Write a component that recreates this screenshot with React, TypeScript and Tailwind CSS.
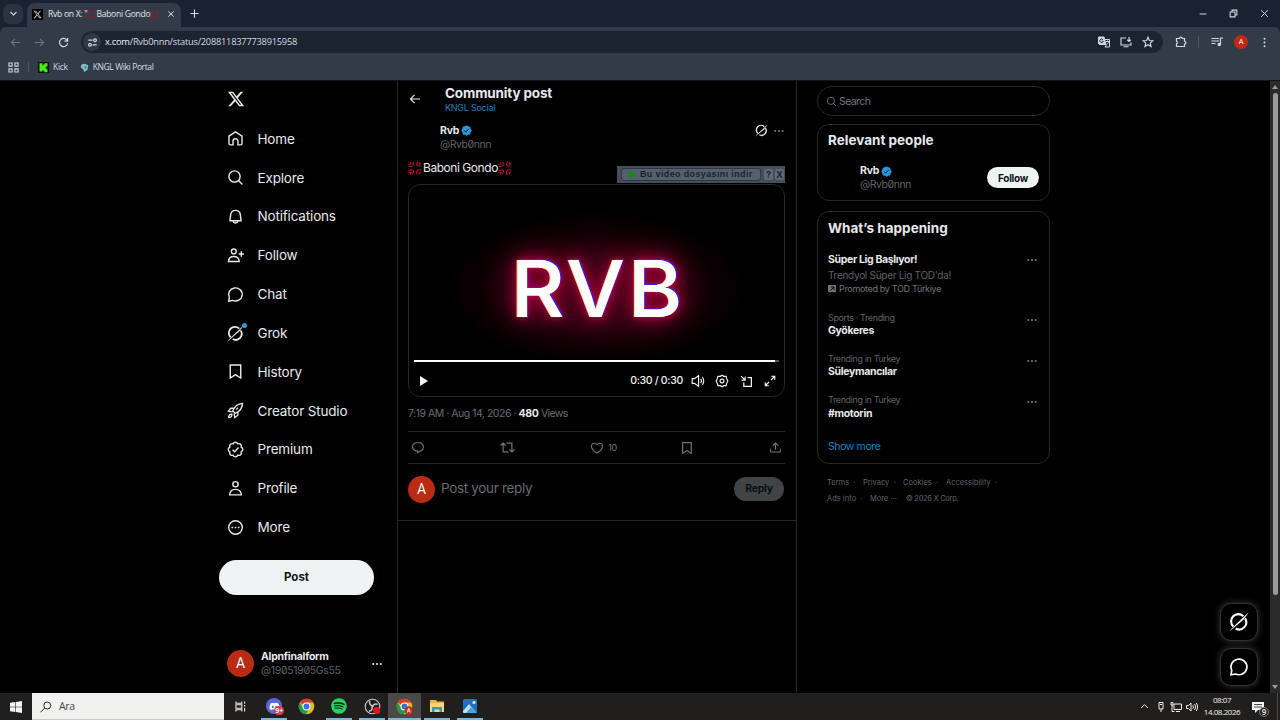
import React from "react";
import { FaDiscord, FaSpotify } from "react-icons/fa6";

type P = { className?: string };

const Svg = ({ className = "", children, sw = 2 }: { className?: string; children: React.ReactNode; sw?: number }) => (
  <svg viewBox="0 0 24 24" fill="none" stroke="currentColor" strokeWidth={sw} className={"block shrink-0 " + className}>
    {children}
  </svg>
);
const Solid = ({ className = "", d }: { className?: string; d: string }) => (
  <svg viewBox="0 0 24 24" fill="currentColor" className={"block shrink-0 " + className}>
    <path d={d} />
  </svg>
);

const BADGE =
  "M22.25 12c0-1.43-.88-2.67-2.19-3.34.46-1.39.2-2.9-.81-3.91s-2.52-1.27-3.91-.81c-.66-1.31-1.91-2.19-3.34-2.19s-2.67.88-3.33 2.19c-1.4-.46-2.91-.2-3.92.81s-1.26 2.52-.8 3.91c-1.31.67-2.2 1.91-2.2 3.34s.89 2.67 2.2 3.34c-.46 1.39-.21 2.9.8 3.91s2.52 1.26 3.91.81c.67 1.31 1.91 2.19 3.34 2.19s2.68-.88 3.34-2.19c1.39.45 2.9.2 3.91-.81s1.27-2.52.81-3.91c1.31-.67 2.19-1.91 2.19-3.34z";

const XLogo = ({ className }: P) => (
  <Solid
    className={className}
    d="M18.244 2.25h3.308l-7.227 8.26 8.502 11.24H16.17l-5.214-6.817L4.99 21.75H1.68l7.73-8.835L1.254 2.25H8.08l4.713 6.231zm-1.161 17.52h1.833L7.084 4.126H5.117z"
  />
);
const Home = ({ className }: P) => (
  <Svg className={className}>
    <path d="M2.8 8.6 12 2.7l9.2 5.9v10.2c0 1.3-.9 2.2-2.2 2.2h-3.5v-5.2a3.5 3.5 0 0 0-7 0V21H5c-1.3 0-2.2-.9-2.2-2.2z" />
  </Svg>
);
const Search = ({ className }: P) => (
  <Svg className={className}>
    <circle cx="10.6" cy="10.6" r="7.9" />
    <path d="m16.2 16.2 5.6 5.6" />
  </Svg>
);
const Bell = ({ className }: P) => (
  <Svg className={className}>
    <path d="M4.2 18 5.2 9.4a6.85 6.85 0 0 1 13.6 0l1 8.6zM8.3 18.2a3.8 3.8 0 0 0 7.4 0" />
  </Svg>
);
const PersonPlus = ({ className }: P) => (
  <Svg className={className}>
    <circle cx="9.6" cy="6.3" r="3.4" />
    <path d="M2 20.5c.2-4.6 3-7.2 7.6-7.2s7.4 2.6 7.6 7.2zM20.2 6v7.600M16.400 9.800H24" />
  </Svg>
);
const Chat = ({ className }: P) => (
  <Svg className={className}>
    <path d="M2.4 21.4 3.3 16A9.6 9.3 0 1 1 8 20.4z" />
  </Svg>
);
const Grok = ({ className }: P) => (
  <Svg className={className} sw={2.5}>
    <path d="M5.2 17.4A8.5 8.5 0 0 1 17.200 5M19.200 7.600A8.500 8.500 0 0 1 8 19.800" />
    <path d="M.4 23.4C3.6 19.3 7.2 16 8.700 14.500L23.6.4C20.4 5.500 17.600 9 16 10.400L9 16.200C6 18.400 4.300 20.600.4 23.400z" fill="currentColor" stroke="none" />
  </Svg>
);
const Bookmark = ({ className }: P) => (
  <Svg className={className}>
    <path d="M4.600 2.800h14.800v18.400L12 16.300l-7.400 4.900z" />
  </Svg>
);
const Rocket = ({ className }: P) => (
  <Svg className={className} sw={1.9}>
    <path d="M8.200 12.500C10.500 6.500 15 2.600 22 2c-.500 7-4.300 11.600-10.400 13.900zM9.600 8.600 5.400 8.800 2 13.200l6 .8M15.500 14.400l-.2 4.200-4.400 3.400-.9-6M2.200 22c.2-3.200 1.500-5 4.700-4.800.2 3.200-1.500 4.600-4.700 4.800zM13 10.500l2.500-2.400" />
  </Svg>
);
const Premium = ({ className }: P) => (
  <Svg className={className}>
    <path d={BADGE} />
    <path d="m7.800 12.200 3 3 5.500-6" />
  </Svg>
);
const Person = ({ className }: P) => (
  <Svg className={className}>
    <circle cx="12" cy="6" r="3.700" />
    <path d="M3.800 21c.3-5 3.300-7.800 8.200-7.800s7.900 2.800 8.200 7.800z" />
  </Svg>
);
const MoreCircle = ({ className }: P) => (
  <Svg className={className}>
    <circle cx="12" cy="12" r="9.600" />
    <path d="M6.300 12h2.400M10.800 12h2.400M15.300 12h2.400" strokeWidth="2.400" />
  </Svg>
);
const Dots = ({ className }: P) => (
  <Svg className={className}>
    <g fill="currentColor" stroke="none">
      <circle cx="3" cy="12" r="2.500" />
      <circle cx="12" cy="12" r="2.500" />
      <circle cx="21" cy="12" r="2.500" />
    </g>
  </Svg>
);
const Verified = ({ className }: P) => (
  <svg viewBox="1 1 22 22" className={"block shrink-0 " + className}>
    <path d={BADGE} fill="#2b96dd" />
    <path d="m7.500 12.200 3.100 3 5.600-6.200" fill="none" stroke="#050a10" strokeWidth="2" />
  </svg>
);
const Reply = ({ className }: P) => (
  <Solid
    className={className}
    d="M1.751 10c0-4.420 3.584-8 8.005-8h4.366c4.490 0 8.129 3.640 8.129 8.130 0 2.960-1.607 5.680-4.196 7.110l-8.054 4.460v-3.690h-.067c-4.490.1-8.183-3.510-8.183-8.010zm8.005-6c-3.317 0-6.005 2.690-6.005 6 0 3.370 2.770 6.080 6.138 6.010l.351-.01h1.761v2.300l5.087-2.810c1.951-1.080 3.163-3.130 3.163-5.360 0-3.390-2.744-6.130-6.129-6.130H9.756z"
  />
);
const Repost = ({ className }: P) => (
  <Svg className={className} sw={1.900}>
    <path d="M1 8.800 5 4.900l4 3.900M5 5.200V19h8.500M23 15.200l-4 3.900-4-3.900M19 18.800V5h-8.500" />
  </Svg>
);
const Heart = ({ className }: P) => (
  <Svg className={className} sw={1.900}>
    <path d="M12 20.500C5.500 16.800 2.500 12.800 2.500 9c0-3 2-5.200 4.800-5.200 2 0 3.600 1 4.700 2.700 1.100-1.700 2.700-2.700 4.700-2.700 2.800 0 4.800 2.200 4.800 5.200 0 3.800-3 7.800-9.500 11.500z" />
  </Svg>
);
const Share = ({ className }: P) => (
  <Svg className={className} sw={1.900}>
    <path d="M12 16V4M6.800 8.800 12 3.600l5.200 5.200M3 14.500V20.500h18V14.500" />
  </Svg>
);
const Anger = ({ className }: P) => (
  <svg viewBox="0 0 24 24" fill="none" stroke="#b3152f" strokeWidth="1.900" strokeLinecap="round" className={"block shrink-0 " + className}>
    <path d="M8.500 2C10.500 7 9 9.500 2 9.500M4.500 2.500C5.500 4.500 5 5.500 2 5.500" />
    <path d="M16.500 1.500C13 5.500 14.500 9 22 8.500M20.500 2.500C18.500 4.500 19 5.500 22 5" />
    <path d="M15.500 22.500C13.500 17 15.500 14 22 15.500M19.500 22C18.500 20 19.500 19 22 19.500" />
    <path d="M2 16C9 13.500 11.500 16.500 7.500 22M2 20C5 18.500 5.500 20 4 22.500" />
  </svg>
);
const Back = ({ className }: P) => (
  <Svg className={className} sw={2.300}>
    <path d="M22 12H3.500M11 3.800 3 12l8 8.200" />
  </Svg>
);

const nav: [string, React.FC<P>][] = [
  ["Home", Home],
  ["Explore", Search],
  ["Notifications", Bell],
  ["Follow", PersonPlus],
  ["Chat", Chat],
  ["Grok", Grok],
  ["History", Bookmark],
  ["Creator Studio", Rocket],
  ["Premium", Premium],
  ["Profile", Person],
  ["More", MoreCircle],
];

function Browser() {
  return (
    <header className="h-[81px] shrink-0 bg-[#1a2231] font-['Open_Sans','Noto_Sans',sans-serif] text-[#d3d8e0]">
      <div className="flex h-[27px] items-center">
        <div className="ml-[3px] flex size-[20px] items-center justify-center rounded-[7px] bg-[#2b3341]">
          <Svg className="size-[9px]" sw={3}>
            <path d="m4 8 8 8 8-8" />
          </Svg>
        </div>
        <div className="ml-[4px] mt-[3px] flex h-[24px] w-[154px] items-center rounded-t-[8px] bg-[#333b49] pb-[2px] pl-[5px]">
          <div className="flex size-[11px] items-center justify-center bg-black">
            <XLogo className="size-[9px] text-[#c8c8c8]" />
          </div>
          <div className="ml-[5px] flex items-center whitespace-pre text-[8.500px] tracking-[-0.250px] text-[#e3e6ea]">
            Rvb on X: "<Anger className="size-[9px]" />Baboni Gondo<Anger className="size-[9px]" />
          </div>
          <Svg className="ml-auto mr-[6px] size-[8px]" sw={3}>
            <path d="m4 4 16 16M20 4 4 20" />
          </Svg>
        </div>
        <Svg className="ml-[8px] size-[11px]" sw={2.600}>
          <path d="M12 3v18M3 12h18" />
        </Svg>
        <div className="ml-auto flex w-[81px] items-center justify-between pr-[11px]">
          <Svg className="size-[8px]" sw={3}>
            <path d="M2 12h20" />
          </Svg>
          <Svg className="size-[9px]" sw={2.800}>
            <path d="M3 8h13v13H3zM8 8V3h13v13h-5" />
          </Svg>
          <Svg className="size-[9px]" sw={2.600}>
            <path d="m3 3 18 18M21 3 3 21" />
          </Svg>
        </div>
      </div>
      <div className="h-[54px] rounded-t-[6px] border-b border-[#11151c] bg-[#333b49]">
        <div className="flex h-[30px] items-center">
          <Svg className="ml-[10px] size-[11px] text-[#707986]" sw={2.200}>
            <path d="M22 12H3M11 4l-8 8 8 8" />
          </Svg>
          <Svg className="ml-[13px] size-[11px] text-[#707986]" sw={2.200}>
            <path d="M2 12h19M13 4l8 8-8 8" />
          </Svg>
          <Svg className="ml-[13px] size-[11px]" sw={2.600}>
            <path d="M20 7.500A9 9 0 1 0 21 14M21 2v7h-7" />
          </Svg>
          <div className="ml-[12px] flex h-[22px] w-[1082px] items-center rounded-full bg-[#1c2432] pl-[2px]">
            <div className="flex size-[18px] items-center justify-center rounded-full bg-[#303846]">
              <Svg className="size-[11px]" sw={2.600}>
                <path d="M3 7h9M12 17h9" />
                <circle cx="17.500" cy="7" r="3" />
                <circle cx="6.500" cy="17" r="3" />
              </Svg>
            </div>
            <span className="ml-[4px] text-[9.300px] tracking-[-0.250px]">
              <span className="text-[#eef0f3]">x.com</span>/Rvb0nnn/status/2088118377738915958
            </span>
            <div className="ml-auto flex items-center gap-[10px] pr-[9px]">
              <Svg className="size-[12px]" sw={2}>
                <path d="M1 2h11l4 15H3L1 15z" fill="currentColor" />
                <path d="M14 7h9v15h-9l3-4M16 11h6M19 9v2M21 11c-.5 3-2 5-4 6" />
                <path d="M10 7.500a3.500 3.500 0 1 0 .5 3H8" stroke="#1c2432" />
              </Svg>
              <Svg className="size-[12px]" sw={2.300}>
                <path d="M12 4H2v14h20v-5M7 21.500h10M18 2v9M14.500 7.500 18 11l3.500-3.500" />
              </Svg>
              <Svg className="size-[12px]" sw={2.300}>
                <path d="m12 2.500 2.800 6.400 7 .7-5.300 4.600 1.600 6.800-6.100-3.600L5.900 21l1.600-6.800L2.200 9.600l7-.7z" />
              </Svg>
            </div>
          </div>
          <Svg className="ml-[12px] size-[12px]" sw={2.400}>
            <path d="M3 5h6a2.800 2.800 0 0 1 5.600 0H19v5.500a2.800 2.800 0 0 1 0 5.600V21H3v-5.200a2.800 2.800 0 0 0 0-5.200z" />
          </Svg>
          <div className="ml-[11px] h-[12px] w-px bg-[#4c5563]" />
          <Svg className="ml-[12px] size-[12px]" sw={2.400}>
            <path d="M1 5h15M1 10h15M1 15h8M19 17V4h5" />
            <circle cx="16.500" cy="17" r="2.300" fill="currentColor" />
          </Svg>
          <div className="ml-[11px] flex size-[14px] items-center justify-center rounded-full bg-[#bf2a10] text-[7.500px] text-white">A</div>
          <Svg className="ml-[11px] size-[11px]">
            <g fill="currentColor" stroke="none">
              <circle cx="12" cy="4" r="2.200" />
              <circle cx="12" cy="12" r="2.200" />
              <circle cx="12" cy="20" r="2.200" />
            </g>
          </Svg>
        </div>
        <div className="flex h-[20px] items-center pl-[8px] text-[8.500px]">
          <Svg className="size-[11px]" sw={2.300}>
            <path d="M2 2h7v7H2zM15 2h7v7h-7zM2 15h7v7H2zM15 15h7v7h-7z" />
          </Svg>
          <div className="ml-[9px] h-[10px] w-px bg-[#4c5563]" />
          <svg viewBox="0 0 11 11" className="ml-[9px] size-[11px]">
            <path fill="#0a140a" d="M0 0h11v11H0z" />
            <path fill="#4bea1d" d="M1.500 1.200h3v2h1V2.200h1v-1h3v3h-1v1h-1v1h1v1h1v3h-3v-1h-1v-1h-1v1.200h-3z" />
          </svg>
          <span className="ml-[4px] tracking-[-0.300px]">Kick</span>
          <svg viewBox="0 0 12 12" className="ml-[12px] size-[9px]">
            <path fill="#7fc3c9" d="M2 2 6 1l5 2-1 6-4 3-2-4-3-2z" />
            <path fill="#2c7f87" d="m5 5 4-1-1 4z" />
          </svg>
          <span className="ml-[4px] tracking-[-0.380px]">KNGL Wiki Portal</span>
        </div>
      </div>
    </header>
  );
}

function Sidebar() {
  return (
    <aside className="flex w-[397px] shrink-0 flex-col pl-[219px] text-[#e7e9ea]">
      <XLogo className="ml-[8px] mt-[9px] size-[18px]" />
      <nav className="mt-[11.500px]">
        {nav.map(([label, Icon]) => (
          <div key={label} className="flex h-[38.840px] items-center pl-[8px]">
            <div className="relative">
              <Icon className="size-[17px]" />
              {label === "Grok" && <i className="absolute -right-[3px] -top-[2px] size-[5px] rounded-full bg-[#2b96dd]" />}
            </div>
            <span className="ml-[13.500px] text-[13.500px] tracking-[-0.170px]">{label}</span>
          </div>
        ))}
      </nav>
      <button className="mt-[13px] h-[35px] w-[155px] rounded-full bg-[#eff3f4] pt-px text-[11.500px] font-bold text-[#0f1419]">Post</button>
      <div className="mt-[55px] flex items-center pl-[8px]">
        <div className="flex size-[27px] items-center justify-center rounded-full bg-[#b92b12] font-['Roboto',sans-serif] text-[14px] text-white">A</div>
        <div className="ml-[7px] text-[10.500px] leading-[14px]">
          <div className="font-bold tracking-[-0.250px]">Alpnfinalform</div>
          <div className="text-[#5f6367] tracking-[-0.330px] [font-feature-settings:'zero']">@19051905Gs55</div>
        </div>
        <Dots className="ml-auto mr-[15px] size-[10px]" />
      </div>
    </aside>
  );
}

function Post() {
  return (
    <main className="w-[400px] shrink-0 border-x border-[#25282b] text-[#e7e9ea]">
      <div className="flex h-[440px] flex-col border-b border-[#25282b] pl-[10px] pr-[11px]">
        <div className="flex h-[36px] items-center">
          <Back className="ml-[1px] size-[12px]" />
          <div className="ml-[24px] pt-[2px]">
            <div className="text-[13.500px] font-bold leading-[15px] tracking-[-0.150px]">Community post</div>
            <div className="text-[9px] leading-[13px] tracking-[-0.250px] text-[#2781bd]">KNGL Social</div>
          </div>
        </div>
        <div className="mt-[7px] flex h-[27px] pl-[32px]">
          <div className="text-[10.500px] leading-[13.500px]">
            <div className="flex items-center gap-[2px] font-bold tracking-[-0.250px]">
              Rvb <Verified className="size-[11px]" />
            </div>
            <div className="tracking-[-0.450px] text-[#5f6367] [font-feature-settings:'zero']">@Rvb0nnn</div>
          </div>
          <Grok className="ml-auto size-[13px]" />
          <Dots className="mr-px ml-[6px] mt-[2px] size-[10px] text-[#71767b]" />
        </div>
        <div className="relative mt-[6px] flex h-[22px] items-center text-[12px]">
          <Anger className="size-[14px]" />
          <span className="ml-px tracking-[-0.450px]">Baboni Gondo</span>
          <Anger className="size-[14px]" />
          <div className="absolute right-0 top-[9px] flex h-[17px] w-[168px] items-center bg-[#454e5a] text-[9px] font-bold text-[#1a2230]">
            <div className="ml-[4px] flex h-[13px] w-[140px] items-center whitespace-nowrap rounded-[3px] border border-[#2c3646] bg-[#56606c] pl-[6px]">
              <svg viewBox="0 0 10 10" className="mr-[3px] size-[9px] shrink-0">
                <path d="M0 0 10 5 0 10l2-5z" fill="#128c17" />
              </svg>
              <span className="font-['Liberation_Sans',sans-serif] tracking-[0.360px]">Bu video dosyasını indir</span>
            </div>
            <span className="ml-[3px] flex h-[11px] w-[9px] items-center justify-center rounded-[2px] bg-[#606a77]">?</span>
            <span className="ml-[2px] flex h-[11px] w-[9px] items-center justify-center rounded-[2px] bg-[#606a77]">X</span>
          </div>
        </div>
        <div className="mt-[5px] flex h-[213px] w-[377px] shrink-0 flex-col overflow-hidden rounded-[12px] border border-[#25282b] bg-black">
          <div className="flex h-[175px] items-center justify-center bg-[radial-gradient(ellipse_150px_78px_at_188px_104px,#3a0619_0%,#2a0411_45%,#0f0105_75%,transparent_100%)] pt-[34px]">
            <div className="scale-x-[1.060] pl-[3px] font-['Inter',sans-serif] text-[78px] font-[450] leading-none tracking-[3px] text-white [text-shadow:-1px_0_0_#ffd9a0,1px_-1px_1px_#2a20ff,0_0_5px_#c80040,0_0_12px_#b0003c,0_0_24px_#8c0032,0_0_34px_#6c0026]">
              RVB
            </div>
          </div>
          <div className="mx-[5px] mt-px flex h-[2px] shrink-0 translate-y-px bg-[#555]">
            <div className="h-[2px] w-[361px] bg-white" />
          </div>
          <div className="flex h-[35px] items-center pl-[11px] pr-[8px] pt-[5px] text-[#f2f2f2]">
            <svg viewBox="0 0 8 10" className="h-[10px] w-[8px]">
              <path d="M0 0 8 5 0 10z" fill="currentColor" />
            </svg>
            <span className="ml-auto text-[10.500px] font-medium tracking-[-0.300px]">0:30 / 0:30</span>
            <Svg className="ml-[8px] size-[14px]">
              <path d="M2 8h4l7-5v18l-7-5H2zM16.500 8.500c1.700 2 1.700 5 0 7M19.500 5.500c3 3.500 3 9.500 0 13" />
            </Svg>
            <Svg className="ml-[10px] size-[14px]">
              <path d="m12 2 3 2h4l1 4 2 4-2 4-1 4h-4l-3 2-3-2H5l-1-4-2-4 2-4 1-4h4z" />
              <circle cx="12" cy="12" r="3.300" />
            </Svg>
            <Svg className="ml-[11px] size-[13px]" sw={2.300}>
              <path d="M14 5h7v16H7v-7M2 2l7 7M9.500 3v6.500H3" />
            </Svg>
            <Svg className="ml-[11px] size-[12px]" sw={2.300}>
              <path d="M14 10 21 3M14.500 2.500h7v7M10 14l-7 7M2.500 14.500v7h7" />
            </Svg>
          </div>
        </div>
        <div className="flex h-[34px] shrink-0 items-center whitespace-pre text-[10.500px] text-[#686d72]">
          <span className="tracking-[-0.480px]">7:19 AM · Aug 14, 2026 · </span>
          <b className="tracking-[-0.300px] text-[#e7e9ea]">480</b>
          <span className="tracking-[-0.600px]"> Views</span>
        </div>
        <div className="flex h-[33px] shrink-0 items-center justify-between border-y border-[#25282b] pl-[3px] pr-[3px] text-[#71767b]">
          <Reply className="size-[14px]" />
          <Repost className="ml-[12px] size-[15px]" />
          <div className="ml-[12px] flex items-center gap-[4px] text-[9px] tracking-[-0.300px]">
            <Heart className="size-[14px]" />10
          </div>
          <Bookmark className="mr-[12px] size-[14px]" />
          <Share className="size-[13px]" />
        </div>
        <div className="flex h-[50px] items-center">
          <div className="flex size-[27px] items-center justify-center rounded-full bg-[#b92b12] font-['Roboto',sans-serif] text-[14px] text-white">A</div>
          <span className="ml-[6px] pb-[2px] text-[13.500px] tracking-[-0.330px] text-[#686d72]">Post your reply</span>
          <button className="ml-auto mr-[1px] h-[24px] w-[50px] rounded-full bg-[#414444] text-[10.500px] font-bold tracking-[-0.300px] text-[#0c0f11]">Reply</button>
        </div>
      </div>
    </main>
  );
}

const trends = [
  ["Sports · Trending", "Gyökeres"],
  ["Trending in Turkey", "Süleymancılar"],
  ["Trending in Turkey", "#motorin"],
];

function Right() {
  return (
    <aside className="flex flex-1 flex-col pl-[20px] pt-[5px] text-[#e7e9ea]">
      <div className="flex h-[30px] w-[233px] items-center rounded-full border border-[#25282b] pl-[8px] pt-px text-[10.500px] text-[#71767b]">
        <Search className="size-[11px]" />
        <span className="ml-[2px] tracking-[-0.600px]">Search</span>
      </div>
      <section className="mt-[8px] h-[77px] w-[233px] rounded-[12px] border border-[#25282b] px-[10px] pt-[6px]">
        <h2 className="text-[13.500px] font-bold leading-[18px]">Relevant people</h2>
        <div className="mt-[14px] flex items-center pl-[32px] text-[10.500px] leading-[14px]">
          <div className="pt-px">
            <div className="flex items-center gap-[2px] font-bold tracking-[-0.250px]">
              Rvb <Verified className="size-[11px]" />
            </div>
            <div className="tracking-[-0.450px] text-[#5f6367] [font-feature-settings:'zero']">@Rvb0nnn</div>
          </div>
          <button className="ml-auto h-[21px] w-[52px] rounded-full bg-[#eff3f4] text-[10px] font-bold tracking-[-0.300px] text-[#0f1419]">Follow</button>
        </div>
      </section>
      <section className="mt-[10px] h-[253px] w-[233px] rounded-[12px] border border-[#25282b] px-[10px] pt-[7px]">
        <h2 className="text-[13.500px] font-bold leading-[18px]">What’s happening</h2>
        <div className="mt-[15px] flex h-[58.500px] justify-between">
          <div className="pt-px leading-[14.600px]">
            <div className="text-[10.500px] font-bold tracking-[-0.350px]">Süper Lig Başlıyor!</div>
            <div className="text-[10px] tracking-[-0.280px] text-[#5f6367]">Trendyol Süper Lig TOD'da!</div>
            <div className="flex items-center text-[9px] tracking-[-0.330px] text-[#71767b]">
              <svg viewBox="0 0 10 10" className="mr-[3px] size-[8px]">
                <rect width="10" height="9" rx="1" fill="#71767b" />
                <path d="m3 7 4-4M3.500 2.500h4v4" stroke="#000" strokeWidth="1.200" fill="none" />
              </svg>
              Promoted by TOD Türkiye
            </div>
          </div>
          <Dots className="mr-[2px] mt-[3px] size-[10px] text-[#71767b]" />
        </div>
        {trends.map(([k, n]) => (
          <div key={n} className="flex h-[41.400px] justify-between">
            <div className="leading-[13.500px]">
              <div className="text-[9px] tracking-[-0.380px] text-[#5f6367]">{k}</div>
              <div className="text-[10.500px] font-bold tracking-[-0.330px]">{n}</div>
            </div>
            <Dots className="mr-[2px] mt-[4px] size-[10px] text-[#71767b]" />
          </div>
        ))}
        <div className="mt-[4px] text-[10.500px] tracking-[-0.400px] text-[#2781bd]">Show more</div>
      </section>
      <footer className="mt-[11px] pl-[10px] text-[7.500px] leading-[16px] text-[#5f6367]">
        <div className="flex whitespace-pre">
          <span className="w-[36px]">Terms  ·</span>
          <span className="w-[40px]">Privacy  ·</span>
          <span className="w-[43px]">Cookies  ·</span>
          <span>Accessibility  ·</span>
        </div>
        <div className="flex whitespace-pre">
          <span className="w-[43px]">Ads info  ·</span>
          <span className="w-[36px]">More ···</span>
          <span className="tracking-[-0.300px]">© 2026 X Corp.</span>
        </div>
      </footer>
    </aside>
  );
}

const Chrome = ({ badge }: { badge?: boolean }) => (
  <svg viewBox="0 0 24 24" className="size-[17px]">
    <circle cx="12" cy="12" r="11" fill="#e2b928" />
    <path d="M12 12 2.500 6.500A11 11 0 0 1 21.500 6.500H12z" fill="#d93b2d" />
    <path d="M2.500 6.500A11 11 0 0 0 11 23l5.500-8.500L12 12 7 14z" fill="#239950" />
    <circle cx="12" cy="12" r="5.600" fill="#fff" />
    <circle cx="12" cy="12" r="4.200" fill="#2f73dd" />
    {badge && <circle cx="18" cy="17.500" r="6" fill="#c42c17" />}
    {badge && <path d="m15.800 20.500 2.200-6 2.200 6M16.500 18.500h3" stroke="#fff" strokeWidth="1.200" fill="none" />}
  </svg>
);

const Task = ({ children, open, active }: { children: React.ReactNode; open?: boolean; active?: boolean }) => (
  <div className={"flex h-[27px] w-[32.600px] flex-col items-center justify-between pt-[5px] " + (active ? "bg-[#4a4946]" : "")}>
    {children}
    <div className={"h-[2px] " + (open ? "bg-[#7ab6dc] " : "") + (active ? "w-full" : "w-[26px]")} />
  </div>
);

function Taskbar() {
  return (
    <footer className="flex h-[27px] shrink-0 items-center bg-[#211f1d] font-['Open_Sans','Noto_Sans',sans-serif] text-[#efefef]">
      <div className="flex w-[32px] justify-center">
        <svg viewBox="0 0 12 12" className="size-[12px]" fill="#f4f4f4">
          <path d="M0 1.700 5.400 1v4.700H0zM6 .9 12 0v5.700H6zM0 6.300h5.400V11L0 10.300zM6 6.300h6V12l-6-.9z" />
        </svg>
      </div>
      <div className="flex h-[27px] w-[192px] items-center border-b border-[#c9c9c9] bg-[#f1f1f0] pl-[8px] pt-[2px] text-[10.500px] text-[#454545]">
        <Svg className="mb-px size-[12px] text-[#222]" sw={2}>
          <circle cx="14.500" cy="9" r="7" />
          <path d="m9.500 14-8.500 8.500" />
        </Svg>
        <span className="ml-[7px] tracking-[-0.300px]">Ara</span>
      </div>
      <div className="flex w-[34px] justify-center pr-[2px]">
        <Svg className="size-[11px]" sw={2.300}>
          <path d="M2 1v4h13V1M2 23v-4h13v4M2 8h13v8H2zM21 1v5M21 15v8" />
          <path d="M19.500 9h3v3h-3z" fill="currentColor" stroke="none" />
        </Svg>
      </div>
      <Task open>
        <div className="relative">
          <div className="flex size-[16px] items-center justify-center rounded-full bg-[#5967dc]">
            <FaDiscord className="size-[11px] text-white" />
          </div>
          <span className="absolute -bottom-px -right-[2px] flex h-[9px] w-[10px] items-center justify-center rounded-full bg-[#cf3f55] text-[7px] font-bold leading-none">9+</span>
        </div>
      </Task>
      <Task>
        <Chrome />
      </Task>
      <Task open>
        <FaSpotify className="size-[16px] text-[#2bd15f]" />
      </Task>
      <Task open>
        <svg viewBox="0 0 24 24" className="size-[17px]">
          <circle cx="12" cy="12" r="10.300" fill="#1b1b1d" stroke="#c9c9c9" strokeWidth="1.600" />
          <path d="M8 4c-1 5 2 7.500 5 7.500M19.500 9c-5-1.500-7.500 1-7 4M7 18.500c4-.5 5.500-3 4-6" stroke="#c9c9c9" strokeWidth="2.200" fill="none" />
          <circle cx="18" cy="17.500" r="5" fill="#e5121b" />
        </svg>
      </Task>
      <Task open active>
        <Chrome badge />
      </Task>
      <Task open>
        <svg viewBox="0 0 16 16" className="size-[16px]">
          <path d="M1 2h6l1 1.500h7V14H1z" fill="#e8b53c" />
          <path d="M1 5h14v9H1z" fill="#f7d774" />
          <path d="M3 9h10v5h-2.500v-2.500h-5V14H3z" fill="#3c93c9" />
        </svg>
      </Task>
      <Task open>
        <svg viewBox="0 0 16 16" className="size-[16px]">
          <rect x="1" y="1" width="14" height="14" rx="1.500" fill="#1f71bd" />
          <path d="m1 13 6-7 7.500 9H2.500A1.500 1.500 0 0 1 1 13z" fill="#bfe3f7" />
          <path d="m4 15 5-6 6 6z" fill="#4da4dd" />
          <circle cx="12" cy="4.500" r="1.500" fill="#e6f5fd" />
        </svg>
      </Task>
      <div className="ml-auto flex items-center">
        <Svg className="size-[9px]" sw={2.600}>
          <path d="m3 16 9-9 9 9" />
        </Svg>
        <Svg className="ml-[6px] size-[12px]" sw={2}>
          <path d="M8 3h8v13H8zM12 16v6M10 7h4" />
        </Svg>
        <Svg className="ml-[3px] size-[12px]" sw={2}>
          <path d="M8 6h15v11H8zM12 21h8M2 3v5h4V3zM4 8v13h5" />
        </Svg>
        <Svg className="ml-[4px] size-[12px]" sw={2}>
          <path d="M1 9h4l5-5v16l-5-5H1zM13.500 8.500c1.500 2 1.500 5 0 7M17 6c2.600 3.500 2.600 8.500 0 12M20.500 4c3.500 5 3.500 11 0 16" />
        </Svg>
        <div className="ml-[5px] w-[38px] pb-px text-center text-[8px] leading-[12px] tracking-[-0.450px]">
          <div>08:07</div>
          <div>14.08.2026</div>
        </div>
        <div className="relative ml-[11px] mr-[13px]">
          <svg viewBox="0 0 12 12" className="size-[12px]">
            <path d="M0 1h12v8H6l-3 3V9H0z" fill="#f2f2f2" />
            <path d="M2 3.500h8M2 6h8" stroke="#333" strokeWidth=".9" />
          </svg>
          <span className="absolute -bottom-[4px] -right-[5px] flex size-[10px] items-center justify-center rounded-full border border-[#777] bg-[#222] text-[8px] font-semibold leading-none">9</span>
        </div>
        <div className="mr-[2px] h-[27px] w-px bg-[#4b4a48]" />
      </div>
    </footer>
  );
}

export default function App() {
  return (
    <div className="flex h-[720px] w-[1280px] flex-col overflow-hidden bg-black font-['Inter','Liberation_Sans',sans-serif]">
      <Browser />
      <div className="relative flex h-[612px] shrink-0">
        <Sidebar />
        <Post />
        <Right />
        <div className="flex w-[10px] flex-col items-center justify-between bg-[#2b2b2b] py-[4px]">
          <svg viewBox="0 0 6 4" className="h-[4px] w-[6px]">
            <path d="M3 0 6 4H0z" fill="#9b9b9b" />
          </svg>
          <div className="mb-auto mt-[4px] h-[502px] w-[5px] rounded-full bg-[#9b9b9b]" />
          <svg viewBox="0 0 6 4" className="h-[4px] w-[6px]">
            <path d="M0 0h6L3 4z" fill="#9b9b9b" />
          </svg>
        </div>
        <div className="absolute bottom-[7px] right-[22px] flex flex-col gap-[7px] text-white">
          <div className="flex size-[38px] items-center justify-center rounded-[11px] border border-[#303234] bg-black shadow-[0_0_7px_rgba(255,255,255,0.22)]">
            <Grok className="size-[20px]" />
          </div>
          <div className="flex size-[38px] items-center justify-center rounded-[11px] border border-[#303234] bg-black shadow-[0_0_7px_rgba(255,255,255,0.22)]">
            <Chat className="size-[20px]" />
          </div>
        </div>
      </div>
      <Taskbar />
    </div>
  );
}
